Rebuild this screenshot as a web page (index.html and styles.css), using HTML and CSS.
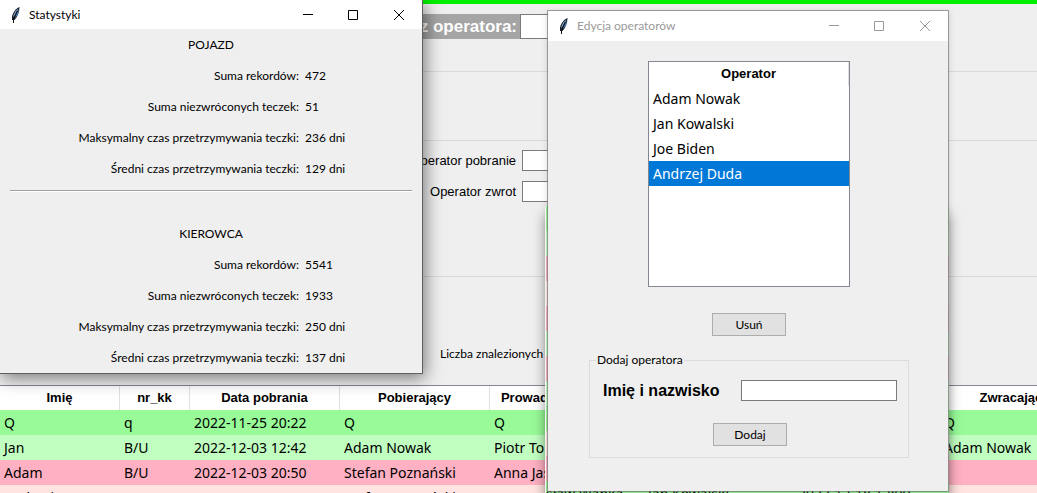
FILE: index.html
```html
<!DOCTYPE html>
<html lang="pl">
<head>
<meta charset="utf-8">
<title>Statystyki</title>
<link rel="stylesheet" href="styles.css">
</head>
<body>
<svg class="defs" aria-hidden="true">
  <symbol id="feather" viewBox="0 0 12 18">
    <path d="M9.500 1C6.500 2 3 6 2 10.500L2 14L4.500 14C7.500 11 9.500 6 9.500 1Z" fill="#16202c"/>
    <path d="M8.500 2.500C6 4 4 7 3 11L4.500 10Z" fill="#9cc4ee"/>
    <path d="M8.700 3.500L5 12L6 11C8 9 8.600 6.500 8.700 3.500Z" fill="#4a88d0"/>
    <path d="M7 5L3.500 12.500L3.500 17" fill="none" stroke="#101010" stroke-width="1"/>
  </symbol>
  <symbol id="min" viewBox="0 0 12 12"><path d="M2 5.500H12" stroke="currentColor" fill="none"/></symbol>
  <symbol id="max" viewBox="0 0 12 12"><path d="M1.500 1.500H10.500V10.500H1.500Z" stroke="currentColor" fill="none"/></symbol>
  <symbol id="close" viewBox="0 0 12 12"><path d="M1 1L11 11M11 1L1 11" stroke="currentColor" fill="none"/></symbol>
</svg>
<main class="app">
  <div class="accent"></div>
  <section class="search">
    <label class="search-label" for="search">z operatora:</label>
    <input class="field search-field" id="search" type="text">
  </section>
  <section class="spacer"></section>
  <section class="filters">
    <label for="taken">Operator pobranie</label><input class="field" id="taken" type="text">
    <label for="returned">Operator zwrot</label><input class="field" id="returned" type="text">
  </section>
  <section class="summary">Liczba znalezionych</section>
  <div class="records-wrap">
    <table class="records">
      <colgroup><col class="w120"><col class="w70"><col class="w150"><col class="w150"><col class="w98"><col class="w176"><col class="w176"><col class="w150"></colgroup>
      <thead><tr><th>Imię</th><th>nr_kk</th><th>Data pobrania</th><th>Pobierający</th><th>Prowadzący</th><th></th><th></th><th>Zwracający</th></tr></thead>
      <tbody>
        <tr class="green"><td>Q</td><td>q</td><td>2022-11-25 20:22</td><td>Q</td><td>Q</td><td></td><td></td><td>Q</td></tr>
        <tr class="mint"><td>Jan</td><td>B/U</td><td>2022-12-03 12:42</td><td>Adam Nowak</td><td>Piotr Tomas</td><td></td><td></td><td>Adam Nowak</td></tr>
        <tr class="pink"><td>Adam</td><td>B/U</td><td>2022-12-03 20:50</td><td>Stefan Poznański</td><td>Anna Jasna</td><td></td><td></td><td></td></tr>
        <tr class="rose"><td>Andrzej</td><td>1234/22</td><td>2022-12-03 20:51</td><td>Stefan Poznański</td><td>Anna S</td><td></td><td></td><td></td></tr>
      </tbody>
    </table>
  </div>
</main>

<div class="backdrop">
  <div class="line green"></div><div class="line mint"></div><div class="line pink"></div><div class="line rose"></div>
  <div class="line pink"></div><div class="line mint"></div><div class="line pink"></div><div class="line mint"></div>
  <div class="line green"></div><div class="line rose"></div><div class="line pink"></div>
  <div class="line green"><span>sław Wanka</span><span>Jan Kowalski</span><span>2022-12-18 12:00</span></div>
</div>

<section class="window stats">
  <header class="titlebar">
    <svg class="feather"><use href="#feather"/></svg><h1>Statystyki</h1>
    <button type="button" aria-label="Minimalizuj"><svg><use href="#min"/></svg></button>
    <button type="button" aria-label="Maksymalizuj"><svg><use href="#max"/></svg></button>
    <button type="button" aria-label="Zamknij"><svg><use href="#close"/></svg></button>
  </header>
  <div class="stats-group">
    <h2>POJAZD</h2>
    <dl>
      <dt>Suma rekordów:</dt><dd>472</dd>
      <dt>Suma niezwróconych teczek:</dt><dd>51</dd>
      <dt>Maksymalny czas przetrzymywania teczki:</dt><dd>236 dni</dd>
      <dt>Średni czas przetrzymywania teczki:</dt><dd>129 dni</dd>
    </dl>
  </div>
  <hr>
  <div class="stats-group">
    <h2>KIEROWCA</h2>
    <dl>
      <dt>Suma rekordów:</dt><dd>5541</dd>
      <dt>Suma niezwróconych teczek:</dt><dd>1933</dd>
      <dt>Maksymalny czas przetrzymywania teczki:</dt><dd>250 dni</dd>
      <dt>Średni czas przetrzymywania teczki:</dt><dd>137 dni</dd>
    </dl>
  </div>
</section>

<section class="window editor">
  <header class="titlebar">
    <svg class="feather"><use href="#feather"/></svg><h1>Edycja operatorów</h1>
    <button type="button" aria-label="Minimalizuj"><svg><use href="#min"/></svg></button>
    <button type="button" aria-label="Maksymalizuj"><svg><use href="#max"/></svg></button>
    <button type="button" aria-label="Zamknij"><svg><use href="#close"/></svg></button>
  </header>
  <div class="editor-body">
    <div class="listbox">
      <table>
        <thead><tr><th>Operator</th></tr></thead>
        <tbody>
          <tr><td>Adam Nowak</td></tr>
          <tr><td>Jan Kowalski</td></tr>
          <tr><td>Joe Biden</td></tr>
          <tr class="selected"><td>Andrzej Duda</td></tr>
        </tbody>
      </table>
    </div>
    <button class="action" type="button">Usuń</button>
    <fieldset>
      <legend>Dodaj operatora</legend>
      <div class="name-row"><label for="name">Imię i nazwisko</label><input class="field" id="name" type="text"></div>
      <button class="action" type="button">Dodaj</button>
    </fieldset>
  </div>
</section>
</body>
</html>
```
FILE: styles.css
```css
* { box-sizing: border-box; }
html, body { height: 100%; }
body {
  margin: 0;
  position: relative;
  overflow: hidden;
  background: #efefef;
  color: #000;
  font: 12px/16px Lato, "Noto Sans", sans-serif;
}
.defs { position: absolute; width: 0; height: 0; }
h1, h2, dl, dd { margin: 0; font: inherit; }

.green { background: #98fb98; }
.mint { background: #c1ffc1; }
.pink { background: #ffb0c2; }
.rose { background: #ffe4e1; }

.field {
  height: 21px;
  padding: 0 3px;
  border: 1px solid #7a7a7a;
  border-radius: 0;
  background: #fff;
}

/* main application window */
.app { height: 100%; overflow: hidden; }
.accent { height: 4px; background: #00f000; }
.search {
  display: flex;
  height: 68px;
  padding-top: 10px;
  border-bottom: 1px solid #d9d9d9;
}
.search-label {
  width: 520px;
  height: 25px;
  padding-right: 3px;
  background: #a5a5a5;
  color: #fff;
  font: bold 17px/25px "Liberation Sans", sans-serif;
  text-align: right;
}
.search-field { width: 150px; height: 25px; }
.spacer { height: 69px; border-bottom: 1px solid #d9d9d9; }
.filters {
  display: grid;
  grid-template-columns: 516px 150px;
  grid-auto-rows: 21px;
  gap: 10px 6px;
  height: 136px;
  padding-top: 9px;
  border-bottom: 1px solid #d9d9d9;
  font: 13px/22px "Liberation Sans", sans-serif;
  text-align: right;
}
.summary { height: 108px; padding: 69px 0 0 440px; }

.records-wrap { overflow: hidden; border-top: 1px solid #828790; }
.records { width: 1090px; table-layout: fixed; }
table { border-collapse: separate; border-spacing: 0; }
.w70 { width: 70px; }
.w98 { width: 98px; }
.w120 { width: 120px; }
.w150 { width: 150px; }
.w176 { width: 176px; }
th {
  height: 24px;
  padding: 0;
  border-right: 1px solid #e0e0e0;
  background: #fff;
  font: bold 13px/24px "Liberation Sans", sans-serif;
}
td {
  height: 25px;
  padding: 0 4px;
  overflow: hidden;
  font: 14px/25px "Noto Sans", sans-serif;
  white-space: nowrap;
}

/* list window hidden behind the editor */
.backdrop {
  position: absolute;
  top: 206px;
  left: 545px;
  width: 404px;
  bottom: 0;
  overflow: hidden;
  border-left: 1px solid #fff;
  box-shadow: 0 8px 12px rgba(0, 0, 0, 0.4);
}
.line {
  display: grid;
  grid-template-columns: 102px 150px 150px;
  height: 25px;
  font: 14px/25px "Noto Sans", sans-serif;
  white-space: nowrap;
}

/* floating windows */
.window { position: absolute; background: #efefef; }
.titlebar {
  display: flex;
  align-items: center;
  background: #fff;
}
.titlebar h1 { flex: 1; }
.feather { width: 12px; height: 18px; }
.titlebar button {
  display: flex;
  align-items: center;
  justify-content: center;
  width: 46px;
  height: 28px;
  padding: 0;
  border: 0;
  background: none;
  color: inherit;
}
.titlebar button svg { width: 12px; height: 12px; }

.stats {
  top: 0;
  left: 0;
  width: 423px;
  border: solid #5f5f5f;
  border-width: 0 1px 1px 0;
  box-shadow: 2px 4px 16px rgba(0, 0, 0, 0.5);
}
.stats .titlebar { height: 29px; padding-left: 10px; }
.stats .feather { margin-right: 7px; }
.stats h2 { line-height: 31px; text-align: center; }
.stats dl {
  display: grid;
  grid-template-columns: 299px 1fr;
  column-gap: 6px;
  line-height: 31px;
}
.stats dt { text-align: right; }
.stats hr {
  height: 2px;
  margin: 6px 10px 26px;
  border: solid;
  border-width: 1px 0;
  border-color: #a0a0a0 #fff #fff;
}

.editor {
  top: 10px;
  left: 547px;
  width: 402px;
  border: 1px solid rgba(120, 120, 120, 0.7);
  background-clip: padding-box;
  box-shadow: 0 2px 6px rgba(0, 0, 0, 0.15);
}
.editor .titlebar { height: 30px; padding-left: 10px; color: #999; }
.editor .feather { margin-right: 7px; }
.editor-body {
  display: flex;
  flex-direction: column;
  align-items: center;
  padding: 20px 39px 33px 41px;
}
.listbox {
  width: 202px;
  height: 226px;
  margin-bottom: 26px;
  border: 1px solid #828790;
  background: #fff;
}
.listbox table { width: 100%; }
.selected { background: #0078d7; color: #fff; }
.action {
  width: 74px;
  height: 23px;
  padding: 0;
  border: 1px solid #adadad;
  background: #e1e1e1;
  color: #000;
  font: 12px/16px Lato, "Noto Sans", sans-serif;
}
fieldset {
  display: flex;
  flex-direction: column;
  align-items: center;
  width: 100%;
  margin: 16px 0 0;
  padding: 12px 11px 11px 13px;
  border: 1px solid #dcdcdc;
}
legend { margin-left: -7px; padding: 0 1px; }
.name-row {
  display: flex;
  align-items: center;
  justify-content: space-between;
  width: 100%;
  margin-bottom: 22px;
}
.name-row label { font: bold 16px/21px "Liberation Sans", sans-serif; }
.name-row .field { width: 156px; }
```
